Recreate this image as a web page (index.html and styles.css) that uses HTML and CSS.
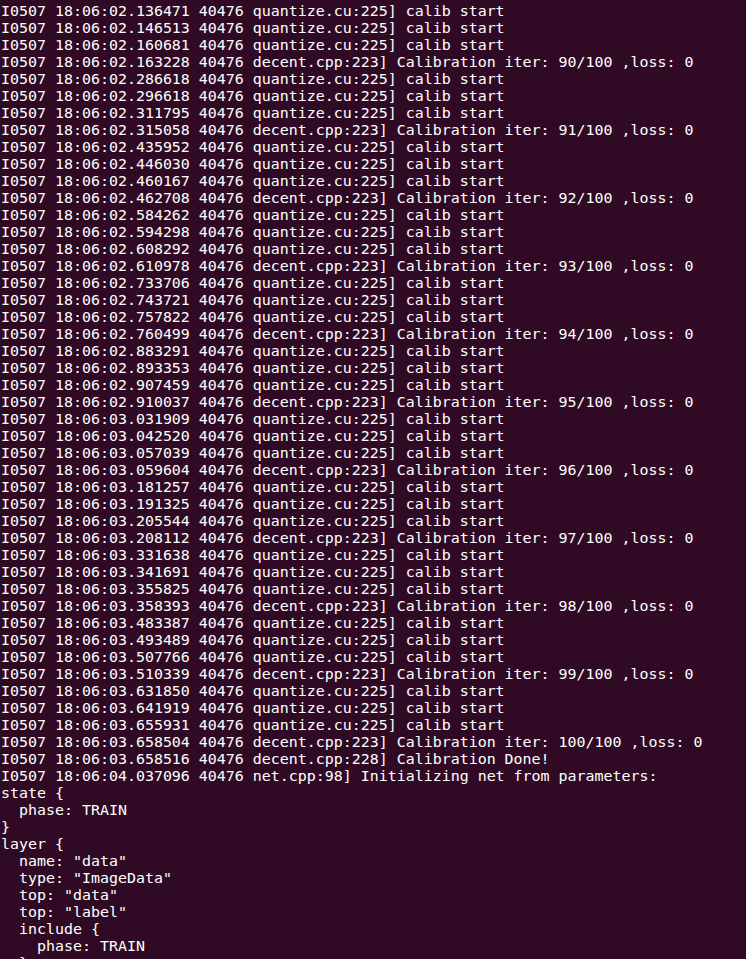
FILE: index.html
```html
<!DOCTYPE html>
<html>
<head>
<meta charset="utf-8">
<link rel="stylesheet" href="styles.css">
</head>
<body>
<pre class="term">I0507 18:06:02.136471 40476 quantize.cu:225] calib start
I0507 18:06:02.146513 40476 quantize.cu:225] calib start
I0507 18:06:02.160681 40476 quantize.cu:225] calib start
I0507 18:06:02.163228 40476 decent.cpp:223] Calibration iter: 90/100 ,loss: 0
I0507 18:06:02.286618 40476 quantize.cu:225] calib start
I0507 18:06:02.296618 40476 quantize.cu:225] calib start
I0507 18:06:02.311795 40476 quantize.cu:225] calib start
I0507 18:06:02.315058 40476 decent.cpp:223] Calibration iter: 91/100 ,loss: 0
I0507 18:06:02.435952 40476 quantize.cu:225] calib start
I0507 18:06:02.446030 40476 quantize.cu:225] calib start
I0507 18:06:02.460167 40476 quantize.cu:225] calib start
I0507 18:06:02.462708 40476 decent.cpp:223] Calibration iter: 92/100 ,loss: 0
I0507 18:06:02.584262 40476 quantize.cu:225] calib start
I0507 18:06:02.594298 40476 quantize.cu:225] calib start
I0507 18:06:02.608292 40476 quantize.cu:225] calib start
I0507 18:06:02.610978 40476 decent.cpp:223] Calibration iter: 93/100 ,loss: 0
I0507 18:06:02.733706 40476 quantize.cu:225] calib start
I0507 18:06:02.743721 40476 quantize.cu:225] calib start
I0507 18:06:02.757822 40476 quantize.cu:225] calib start
I0507 18:06:02.760499 40476 decent.cpp:223] Calibration iter: 94/100 ,loss: 0
I0507 18:06:02.883291 40476 quantize.cu:225] calib start
I0507 18:06:02.893353 40476 quantize.cu:225] calib start
I0507 18:06:02.907459 40476 quantize.cu:225] calib start
I0507 18:06:02.910037 40476 decent.cpp:223] Calibration iter: 95/100 ,loss: 0
I0507 18:06:03.031909 40476 quantize.cu:225] calib start
I0507 18:06:03.042520 40476 quantize.cu:225] calib start
I0507 18:06:03.057039 40476 quantize.cu:225] calib start
I0507 18:06:03.059604 40476 decent.cpp:223] Calibration iter: 96/100 ,loss: 0
I0507 18:06:03.181257 40476 quantize.cu:225] calib start
I0507 18:06:03.191325 40476 quantize.cu:225] calib start
I0507 18:06:03.205544 40476 quantize.cu:225] calib start
I0507 18:06:03.208112 40476 decent.cpp:223] Calibration iter: 97/100 ,loss: 0
I0507 18:06:03.331638 40476 quantize.cu:225] calib start
I0507 18:06:03.341691 40476 quantize.cu:225] calib start
I0507 18:06:03.355825 40476 quantize.cu:225] calib start
I0507 18:06:03.358393 40476 decent.cpp:223] Calibration iter: 98/100 ,loss: 0
I0507 18:06:03.483387 40476 quantize.cu:225] calib start
I0507 18:06:03.493489 40476 quantize.cu:225] calib start
I0507 18:06:03.507766 40476 quantize.cu:225] calib start
I0507 18:06:03.510339 40476 decent.cpp:223] Calibration iter: 99/100 ,loss: 0
I0507 18:06:03.631850 40476 quantize.cu:225] calib start
I0507 18:06:03.641919 40476 quantize.cu:225] calib start
I0507 18:06:03.655931 40476 quantize.cu:225] calib start
I0507 18:06:03.658504 40476 decent.cpp:223] Calibration iter: 100/100 ,loss: 0
I0507 18:06:03.658516 40476 decent.cpp:228] Calibration Done!
I0507 18:06:04.037096 40476 net.cpp:98] Initializing net from parameters:
state {
  phase: TRAIN
}
layer {
  name: "data"
  type: "ImageData"
  top: "data"
  top: "label"
  include {
    phase: TRAIN
  }</pre>
</body>
</html>
```
FILE: styles.css
```css
html, body {
  margin: 0;
  padding: 0;
  background: #300a24;
  height: 100%;
  overflow: hidden;
}
.term {
  margin: 0;
  padding: 3px 0 0 1px;
  font-family: "DejaVu Sans Mono", "Liberation Mono", monospace;
  font-size: 14.95px;
  line-height: 17px;
  color: #ffffff;
  white-space: pre;
}
```
